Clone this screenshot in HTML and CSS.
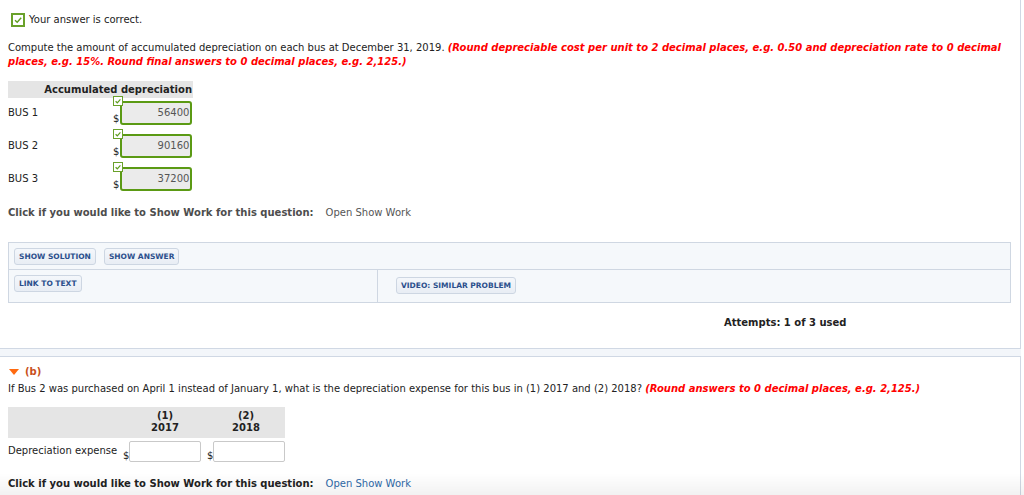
FILE: index.html
```html
<!DOCTYPE html>
<html lang="en">
<head>
    <meta charset="UTF-8">
    <title>Question - Depreciation</title>
    <link rel="stylesheet" href="styles.css">
</head>
<body>
    <div class="page">

        <!-- Part (a) -->
        <section class="part part-a">
            <div class="correct">
                <span class="check-box">
                    <svg width="10" height="10" viewBox="0 0 10 10"><path d="M2 5.2 L4.2 7.3 L8.2 2.8" fill="none" stroke="#5f9d1e" stroke-width="1.4"/></svg>
                </span>
                Your answer is correct.
            </div>

            <p class="question">Compute the amount of accumulated depreciation on each bus at December 31, 2019. <em class="hint">(Round depreciable cost per unit to 2 decimal places, e.g. 0.50 and depreciation rate to 0 decimal places, e.g. 15%. Round final answers to 0 decimal places, e.g. 2,125.)</em></p>

            <div class="acc-table">
                <div class="acc-head">Accumulated depreciation</div>
                <div class="acc-row">
                    <span class="row-label">BUS 1</span>
                    <span class="cell">
                        <span class="dollar">$</span>
                        <span class="answer correct-answer">56400
                            <span class="mini-check"><svg width="8" height="8" viewBox="0 0 8 8"><path d="M1.6 4.2 L3.3 5.8 L6.4 2.4" fill="none" stroke="#5f9d1e" stroke-width="1.2"/></svg></span>
                        </span>
                    </span>
                </div>
                <div class="acc-row">
                    <span class="row-label">BUS 2</span>
                    <span class="cell">
                        <span class="dollar">$</span>
                        <span class="answer correct-answer">90160
                            <span class="mini-check"><svg width="8" height="8" viewBox="0 0 8 8"><path d="M1.6 4.2 L3.3 5.8 L6.4 2.4" fill="none" stroke="#5f9d1e" stroke-width="1.2"/></svg></span>
                        </span>
                    </span>
                </div>
                <div class="acc-row">
                    <span class="row-label">BUS 3</span>
                    <span class="cell">
                        <span class="dollar">$</span>
                        <span class="answer correct-answer">37200
                            <span class="mini-check"><svg width="8" height="8" viewBox="0 0 8 8"><path d="M1.6 4.2 L3.3 5.8 L6.4 2.4" fill="none" stroke="#5f9d1e" stroke-width="1.2"/></svg></span>
                        </span>
                    </span>
                </div>
            </div>

            <div class="show-work muted">
                <strong>Click if you would like to Show Work for this question:</strong>
                <span class="show-link">Open Show Work</span>
            </div>

            <div class="tools">
                <div class="tools-row">
                    <button class="tool-btn">SHOW SOLUTION</button>
                    <button class="tool-btn">SHOW ANSWER</button>
                </div>
                <div class="tools-row split">
                    <div class="tools-cell"><button class="tool-btn">LINK TO TEXT</button></div>
                    <div class="tools-cell video"><button class="tool-btn">VIDEO: SIMILAR PROBLEM</button></div>
                </div>
            </div>

            <div class="attempts">Attempts: 1 of 3 used</div>
        </section>

        <!-- Part (b) -->
        <section class="part part-b">
            <div class="part-title"><span class="arrow"></span>(b)</div>

            <p class="question single">If Bus 2 was purchased on April 1 instead of January 1, what is the depreciation expense for this bus in (1) 2017 and (2) 2018? <em class="hint">(Round answers to 0 decimal places, e.g. 2,125.)</em></p>

            <div class="exp-table">
                <div class="exp-head">
                    <span></span>
                    <span class="col-head">(1)<br>2017</span>
                    <span class="col-head">(2)<br>2018</span>
                </div>
                <div class="exp-row">
                    <span class="row-label">Depreciation expense</span>
                    <span class="cell"><span class="dollar">$</span><span class="answer empty"></span></span>
                    <span class="cell"><span class="dollar">$</span><span class="answer empty"></span></span>
                </div>
            </div>

            <div class="show-work">
                <strong>Click if you would like to Show Work for this question:</strong>
                <a class="show-link blue" href="#">Open Show Work</a>
            </div>
        </section>
    </div>
    <div class="bottom-fade"></div>
</body>
</html>
```

FILE: styles.css
```css
body {
    margin: 0;
    padding: 0;
    background: #fff;
    font-family: "DejaVu Sans", Verdana, sans-serif;
    font-size: 10px;
    line-height: 14px;
    color: #222;
}
.page {
    width: 1021px;
    background: #f3f6fa;
}
.part {
    background: #fff;
    border-right: 1px solid #d0d8e4;
    padding: 0 9px 0 8px;
}
.part-a {
    padding-top: 13px;
    padding-bottom: 18px;
    border-bottom: 1px solid #d0d8e4;
    margin-bottom: 7px;
}
.part-b {
    border-top: 1px solid #d0d8e4;
    padding-top: 8px;
    padding-bottom: 20px;
}

/* correct banner */
.correct {
    display: flex;
    align-items: center;
    gap: 4px;
    height: 14px;
}
.check-box {
    margin-left: 3px;
    margin-top: -1px;
    width: 10px;
    height: 10px;
    border: 2px solid #6aa12a;
    background: #fff;
    display: flex;
    align-items: center;
    justify-content: center;
}
.question {
    margin: 14px 0 0;
}
.question.single {
    margin-top: 3px;
}
.hint {
    color: #ff0000;
    font-weight: bold;
}

/* accumulated depreciation table */
.acc-table {
    width: 185px;
    margin-top: 12px;
}
.acc-head {
    background: #e5e5e5;
    height: 17px;
    line-height: 17px;
    font-weight: bold;
    text-align: right;
    padding-right: 1px;
}
.acc-row {
    display: grid;
    grid-template-columns: 105px 80px;
    align-items: center;
    padding: 3px 0 6px;
}
.cell {
    display: flex;
    align-items: flex-end;
    gap: 1px;
}
.dollar {
    line-height: 10px;
    padding-bottom: 1px;
}
.answer {
    position: relative;
    box-sizing: border-box;
    width: 72px;
    border-radius: 3px;
    text-align: right;
    color: #555;
}
.correct-answer {
    height: 24px;
    line-height: 20px;
    border: 2px solid #5b9a14;
    background: #ebebeb;
    padding-right: 1px;
}
.mini-check {
    position: absolute;
    left: -9px;
    top: -7px;
    width: 8px;
    height: 8px;
    border: 1px solid #6aa12a;
    background: #fff;
    display: flex;
}
.answer.empty {
    height: 21px;
    border: 1px solid #c9c9c9;
    background: #fff;
    border-radius: 2px;
}

/* show work */
.show-work {
    margin-top: 9px;
    display: flex;
    gap: 12px;
}
.show-work.muted {
    color: #4d4d4d;
}
.show-link {
    color: #555;
}
.show-link.blue {
    color: #2f6aa8;
    text-decoration: none;
}

/* tool buttons panel */
.tools {
    margin-top: 22px;
    border: 1px solid #cfd7e2;
    background: #f5f8fb;
}
.tools-row {
    display: flex;
    gap: 8px;
    height: 21px;
    padding: 5px 5px 0;
}
.tools-row.split {
    border-top: 1px solid #cfd7e2;
    height: 32px;
    padding: 0;
    gap: 0;
}
.tools-cell {
    box-sizing: border-box;
    width: 368px;
    padding: 5px 5px 0;
}
.tools-cell.video {
    flex: 1;
    border-left: 1px solid #cfd7e2;
    padding: 7px 0 0 18px;
}
.tool-btn {
    height: 17px;
    padding: 0 4px;
    border: 1px solid #cdd6e2;
    border-radius: 3px;
    background: linear-gradient(#f4f7fb, #e8edf4);
    color: #2b4f8c;
    font-family: "DejaVu Sans", Verdana, sans-serif;
    font-size: 7.5px;
    font-weight: bold;
    cursor: pointer;
}
.attempts {
    margin-top: 13px;
    padding-left: 716px;
    font-weight: bold;
}

/* part b */
.part-title {
    display: flex;
    align-items: center;
    gap: 6px;
    color: #c8501a;
    font-weight: bold;
    padding-left: 1px;
}
.arrow {
    width: 0;
    height: 0;
    border-left: 5px solid transparent;
    border-right: 5px solid transparent;
    border-top: 6px solid #ff6a10;
}
.exp-table {
    margin-top: 11px;
    width: 277px;
}
.exp-head {
    display: grid;
    grid-template-columns: 115px 84px 78px;
    background: #e5e5e5;
    padding: 3px 0 4px;
    line-height: 12px;
    font-weight: bold;
}
.col-head {
    text-align: center;
}
.exp-row {
    display: grid;
    grid-template-columns: 115px 84px 78px;
    align-items: center;
    padding-top: 3px;
}
.exp-row .cell {
    gap: 0;
}
.exp-row .row-label {
    padding-bottom: 2px;
}
.part-b .show-work {
    margin-top: 15px;
}

.bottom-fade {
    position: fixed;
    left: 0;
    right: 0;
    bottom: 0;
    height: 22px;
    background: linear-gradient(rgba(0, 0, 0, 0), rgba(0, 0, 0, 0.05));
    pointer-events: none;
}
```
